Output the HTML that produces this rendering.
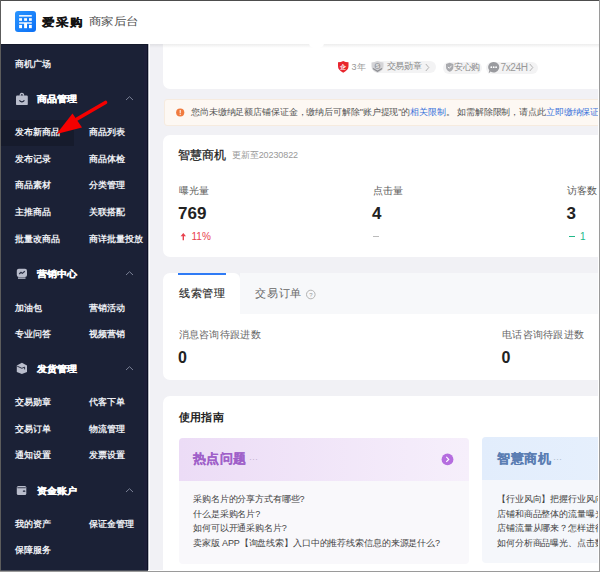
<!DOCTYPE html>
<html><head><meta charset="utf-8">
<style>
*{margin:0;padding:0;box-sizing:border-box}
html,body{width:600px;height:572px;overflow:hidden;background:#fff}
body{font-family:"Liberation Sans",sans-serif;position:relative}
.a{position:absolute;white-space:nowrap;line-height:1}
.si{font-size:9px;color:#eceef3;font-weight:600}
.sh{font-size:10px;color:#fff;font-weight:700;-webkit-text-stroke:0.3px #fff;transform:scaleY(.9);transform-origin:0 80%}
.card{position:absolute;background:#fff;border-radius:7px}
.g{color:#666}
</style></head><body>
<!-- header -->
<div class="a" style="left:1px;top:1px;width:598px;height:43px;background:#fff"></div>
<div class="a" style="left:15px;top:11px;width:21px;height:21px;border-radius:3px;background:linear-gradient(135deg,#2a95ff,#0b6ff5)"></div>
<svg class="a" style="left:15px;top:11px" width="21" height="21" viewBox="15 11 21 21" fill="#fff">
<rect x="19.1" y="15.1" width="12.7" height="1.5"/>
<rect x="19.1" y="18.2" width="2.9" height="2.6"/><rect x="24.1" y="18.2" width="2.9" height="2.6"/><rect x="29" y="18.2" width="2.8" height="2.6"/>
<rect x="19.1" y="22.3" width="12.7" height="1.4"/>
<rect x="19.1" y="24.9" width="2.9" height="3.3"/><rect x="24.1" y="23" width="2.9" height="5.2"/><rect x="29" y="24.9" width="2.8" height="3.3"/>
</svg>
<div class="a" style="left:42px;top:16px;font-size:13px;font-weight:700;color:#111;letter-spacing:1px;-webkit-text-stroke:.2px #111;transform:scaleY(.88);transform-origin:0 0">爱采购</div>
<div class="a" style="left:89px;top:16px;font-size:12px;letter-spacing:.45px;color:#505050;transform:scaleY(.88);transform-origin:0 0">商家后台</div>
<!-- sidebar -->
<div class="a" style="left:1px;top:44px;width:147px;height:527px;background:#1b2136"></div>
<div class="a" style="left:1px;top:120px;width:73px;height:25.5px;background:#161b2c"></div>
<div class="a si" style="left:15px;top:59.8px">商机广场</div>
<div class="a sh" style="left:37px;top:94.0px">商品管理</div>
<svg class="a" style="left:15px;top:91px" width="14" height="15" viewBox="15 91 14 15"><path d="M20.2 95.8 Q20.2 93.3 21.9 93.3 Q23.6 93.3 23.6 95.8" fill="none" stroke="#b9bdcc" stroke-width="1.3"/><rect x="16" y="95.5" width="11.8" height="9.6" rx="1.2" fill="#b9bdcc"/><path d="M19.4 100.3 Q21.9 103.4 24.4 100.3" fill="none" stroke="#1b2136" stroke-width="1.2"/></svg>
<svg class="a" style="left:125px;top:96.0px" width="9" height="5" viewBox="0 0 9 5"><path d="M1 4 L4.5 0.7 L8 4" fill="none" stroke="#7a8095" stroke-width="1"/></svg>
<div class="a si" style="left:15px;top:128.0px">发布新商品</div>
<div class="a si" style="left:89px;top:128.0px">商品列表</div>
<div class="a si" style="left:15px;top:154.7px">发布记录</div>
<div class="a si" style="left:89px;top:154.7px">商品体检</div>
<div class="a si" style="left:15px;top:181.2px">商品素材</div>
<div class="a si" style="left:89px;top:181.2px">分类管理</div>
<div class="a si" style="left:15px;top:207.6px">主推商品</div>
<div class="a si" style="left:89px;top:207.6px">关联搭配</div>
<div class="a si" style="left:15px;top:235.0px">批量改商品</div>
<div class="a si" style="left:89px;top:235.0px">商详批量投放</div>
<div class="a sh" style="left:37px;top:269.2px">营销中心</div>
<svg class="a" style="left:15px;top:267px" width="14" height="13" viewBox="15 267 14 13"><rect x="16.8" y="268.7" width="10.2" height="8.2" rx="2" fill="#b9bdcc"/><rect x="18" y="277.4" width="7.5" height="1.4" fill="#b9bdcc"/><path d="M19.2 274 L21 272.3 L22.3 273.4 L24.8 271.2" fill="none" stroke="#2a3045" stroke-width="1.2" stroke-linejoin="round"/></svg>
<svg class="a" style="left:125px;top:271.2px" width="9" height="5" viewBox="0 0 9 5"><path d="M1 4 L4.5 0.7 L8 4" fill="none" stroke="#7a8095" stroke-width="1"/></svg>
<div class="a si" style="left:15px;top:303.5px">加油包</div>
<div class="a si" style="left:89px;top:303.5px">营销活动</div>
<div class="a si" style="left:15px;top:330.0px">专业问答</div>
<div class="a si" style="left:89px;top:330.0px">视频营销</div>
<div class="a sh" style="left:37px;top:363.8px">发货管理</div>
<svg class="a" style="left:15px;top:361px" width="14" height="15" viewBox="15 361 14 15"><path d="M21.9 362.8 L27 365.4 L27 372 L21.9 374 L16.8 372 L16.8 365.4 Z" fill="#b9bdcc"/><path d="M17.2 366.2 L21.9 368.3 L24.6 367.1 L24.6 369.4" fill="none" stroke="#1b2136" stroke-width="0.9"/></svg>
<svg class="a" style="left:125px;top:365.7px" width="9" height="5" viewBox="0 0 9 5"><path d="M1 4 L4.5 0.7 L8 4" fill="none" stroke="#7a8095" stroke-width="1"/></svg>
<div class="a si" style="left:15px;top:397.8px">交易勋章</div>
<div class="a si" style="left:89px;top:397.8px">代客下单</div>
<div class="a si" style="left:15px;top:424.5px">交易订单</div>
<div class="a si" style="left:89px;top:424.5px">物流管理</div>
<div class="a si" style="left:15px;top:450.8px">通知设置</div>
<div class="a si" style="left:89px;top:450.8px">发票设置</div>
<div class="a sh" style="left:37px;top:485.6px">资金账户</div>
<svg class="a" style="left:15px;top:485px" width="13" height="12" viewBox="15 485 13 12"><rect x="16.8" y="486" width="9.5" height="9" rx="1.5" fill="#b9bdcc"/><rect x="17.3" y="487.4" width="8.5" height="0.8" fill="#1b2136"/><rect x="22.8" y="490.6" width="2.6" height="1.2" rx=".6" fill="#1b2136"/></svg>
<svg class="a" style="left:125px;top:487.5px" width="9" height="5" viewBox="0 0 9 5"><path d="M1 4 L4.5 0.7 L8 4" fill="none" stroke="#7a8095" stroke-width="1"/></svg>
<div class="a si" style="left:15px;top:519.5px">我的资产</div>
<div class="a si" style="left:89px;top:519.5px">保证金管理</div>
<div class="a si" style="left:15px;top:545.8px">保障服务</div>

<!-- main -->
<div class="a" style="left:150px;top:44px;width:447.5px;height:527px;background:#f1f1f5"></div>

<!-- top card -->
<div class="card" style="left:163px;top:36px;width:450px;height:52.7px"></div>
<svg class="a" style="left:337px;top:60px" width="13" height="14" viewBox="337 60 13 14"><path d="M338 62.3 Q341 62 343.2 60.9 Q345.4 62 348.5 62.3 L348.5 66.3 Q348.5 70.3 343.2 72.7 Q338 70.3 338 66.3 Z" fill="#e8262d"/><text x="343.2" y="69.3" font-size="6" fill="#fff" text-anchor="middle" font-weight="bold">企</text></svg>
<div class="a" style="left:351.5px;top:63px;font-size:9px;letter-spacing:.6px;color:#999">3年</div>
<div class="a" style="left:372px;top:61px;width:64px;height:11.5px;border-radius:6px;background:#f3f3f4"></div>
<svg class="a" style="left:371px;top:60px" width="14" height="14" viewBox="371 60 14 14"><path d="M371.5 62.5 Q374.5 62.2 377.5 61 Q380.5 62.2 383.5 62.5 L383.5 66.5 Q383.5 70.5 377.5 72.8 Q371.5 70.5 371.5 66.5 Z" fill="#d4d4d7"/><path d="M373 68.5 L377.5 71.2 L382 68.5" fill="none" stroke="#8d8e93" stroke-width="1.3"/><circle cx="377.5" cy="66" r="2.9" fill="#a3a4a8"/><text x="377.5" y="67.9" font-size="5" fill="#eee" text-anchor="middle" font-weight="bold">S</text></svg>
<div class="a" style="left:386.5px;top:62px;font-size:9px;letter-spacing:-.1px;color:#888">交易勋章</div>
<svg class="a" style="left:423.5px;top:62.5px" width="7" height="10" viewBox="0 0 7 10"><path d="M1.8 1 L4.8 4.5 L1.8 8" fill="none" stroke="#aaa" stroke-width=".9"/></svg>
<div class="a" style="left:443px;top:62px;width:39px;height:11.5px;border-radius:6px;background:#f3f3f4"></div>
<svg class="a" style="left:445px;top:62px" width="10" height="11" viewBox="445 62 10 11"><path d="M449.7 62.8 L453.4 64 L453.4 67 Q453.4 70.3 449.7 71.8 Q446 70.3 446 67 L446 64 Z" fill="#a9aaae"/><path d="M447.9 66.9 L449.3 68.3 L451.6 65.7" fill="none" stroke="#fff" stroke-width=".9"/></svg>
<div class="a" style="left:454px;top:63px;font-size:9px;letter-spacing:-.4px;color:#888">安心购</div>
<div class="a" style="left:486px;top:62px;width:52px;height:11.5px;border-radius:6px;background:#f3f3f4"></div>
<svg class="a" style="left:487px;top:61px" width="13" height="14" viewBox="487 61 13 14"><path d="M493.7 62 A5.5 5.2 0 1 1 490.5 71.4 L488.7 73.5 L489.3 70.3 A5.5 5.2 0 0 1 493.7 62 Z" fill="#999a9e"/><circle cx="491.3" cy="67.2" r=".9" fill="#fff"/><circle cx="493.7" cy="67.2" r=".9" fill="#fff"/><circle cx="496.1" cy="67.2" r=".9" fill="#fff"/></svg>
<div class="a" style="left:500.5px;top:63px;font-size:10px;letter-spacing:-.35px;color:#999">7x24H</div>
<svg class="a" style="left:528px;top:63px" width="7" height="10" viewBox="0 0 7 10"><path d="M1.8 1 L4.8 4.5 L1.8 8" fill="none" stroke="#aaa" stroke-width=".9"/></svg>

<!-- banner -->
<div class="a" style="left:163.5px;top:98.5px;width:450px;height:27.2px;border-radius:3px;background:#fdf8f3;border:1px solid #f6ebdf"></div>
<svg class="a" style="left:175px;top:107px" width="11" height="11" viewBox="175 107 11 11"><circle cx="180.2" cy="112.5" r="4.1" fill="#f07b3f"/><rect x="179.7" y="110" width="1" height="3.3" fill="#fff"/><rect x="179.7" y="113.9" width="1" height="1" fill="#fff"/></svg>
<div class="a" style="left:191px;top:107.5px;font-size:9px;letter-spacing:-.12px;color:#555">您尚未缴纳足额店铺保证金，缴纳后可解除"账户提现"的<span style="color:#3b73db">相关限制</span>。 如需解除限制，请点此<span style="color:#3b73db">立即缴纳保证金</span></div>

<!-- smart card -->
<div class="card" style="left:163px;top:135px;width:450px;height:121.7px"></div>
<div class="a" style="left:177.5px;top:149px;font-size:12px;font-weight:500;color:#222;-webkit-text-stroke:.25px #222">智慧商机</div>
<div class="a" style="left:232px;top:151px;font-size:9px;letter-spacing:-.1px;color:#999">更新至20230822</div>
<div class="a" style="left:178.5px;top:185.5px;font-size:10px;letter-spacing:.2px;color:#5a5a5a">曝光量</div>
<div class="a" style="left:178px;top:205px;font-size:17px;font-weight:bold;color:#222">769</div>
<svg class="a" style="left:180px;top:232px" width="7" height="9" viewBox="180 232 7 9"><path d="M183.3 233 L186 236.3 L184 236.3 L184 240.3 L182.6 240.3 L182.6 236.3 L180.6 236.3 Z" fill="#e8414d"/></svg>
<div class="a" style="left:191.5px;top:232px;font-size:10px;color:#e8414d">11%</div>
<div class="a" style="left:372.5px;top:185.5px;font-size:10px;letter-spacing:.2px;color:#5a5a5a">点击量</div>
<div class="a" style="left:372px;top:205px;font-size:17px;font-weight:bold;color:#222">4</div>
<div class="a" style="left:373px;top:236px;width:6px;height:1px;background:#bbb"></div>
<div class="a" style="left:566.5px;top:185.5px;font-size:10px;letter-spacing:.2px;color:#5a5a5a">访客数</div>
<div class="a" style="left:566.5px;top:205px;font-size:17px;font-weight:bold;color:#222">3</div>
<div class="a" style="left:568.5px;top:236px;width:6px;height:1.2px;background:#22b88a"></div>
<div class="a" style="left:580px;top:232px;font-size:10px;color:#22b88a">1</div>

<!-- tabs card -->
<div class="card" style="left:163px;top:272.8px;width:450px;height:107.2px"></div>
<div class="a" style="left:240px;top:272.8px;width:360px;height:41.2px;background:#f7f8fa;border-radius:0 0 0 0"></div>
<div class="a" style="left:234px;top:272.8px;width:6px;height:6px;background:#f0f1f5"></div>
<div class="a" style="left:228px;top:272.8px;width:12px;height:12px;background:#fff;border-radius:0 6px 0 0"></div>
<div class="a" style="left:178px;top:272.8px;width:48px;height:2px;background:#2f7bf5"></div>
<div class="a" style="left:179px;top:288px;font-size:11px;letter-spacing:.6px;font-weight:500;color:#2a2a2a;-webkit-text-stroke:.15px #2a2a2a">线索管理</div>
<div class="a" style="left:255px;top:288px;font-size:11px;letter-spacing:.8px;color:#666">交易订单</div>
<svg class="a" style="left:305px;top:289px" width="12" height="12" viewBox="305 289 12 12"><circle cx="310.8" cy="294.5" r="4.3" fill="none" stroke="#aaa" stroke-width=".9"/><text x="310.8" y="296.8" font-size="6" fill="#999" text-anchor="middle">?</text></svg>
<div class="a" style="left:178.5px;top:329.5px;font-size:10px;letter-spacing:.3px;color:#666">消息咨询待跟进数</div>
<div class="a" style="left:178px;top:350px;font-size:16px;font-weight:bold;color:#222">0</div>
<div class="a" style="left:502px;top:329.5px;font-size:10px;letter-spacing:.3px;color:#666">电话咨询待跟进数</div>
<div class="a" style="left:501.5px;top:350px;font-size:16px;font-weight:bold;color:#222">0</div>

<!-- guide card -->
<div class="card" style="left:163px;top:395.9px;width:450px;height:200px"></div>
<div class="a" style="left:178.5px;top:412px;font-size:11px;letter-spacing:.4px;font-weight:700;color:#222">使用指南</div>
<div class="a" style="left:178.5px;top:437.5px;width:290px;height:126px;border-radius:4px;background:#f9f8fb;overflow:hidden"><div style="height:43.2px;background:linear-gradient(90deg,#ecdcf6,#f6effb)"></div></div>
<div class="a" style="left:192.5px;top:452px;font-size:13px;letter-spacing:.5px;font-weight:bold;color:#9f5fc9;-webkit-text-stroke:.12px #9f5fc9">热点问题</div>
<div class="a" style="left:249px;top:455px;font-size:9px;color:#c4b2d0">···</div>
<svg class="a" style="left:441px;top:453px" width="13" height="13" viewBox="441 453 13 13"><circle cx="447.5" cy="459.4" r="5.9" fill="#b56ddf"/><path d="M446.3 456.9 L448.7 459.4 L446.3 461.9" fill="none" stroke="#fff" stroke-width="1.2"/></svg>
<div class="a" style="left:193px;top:494.5px;font-size:9px;letter-spacing:-.12px;color:#444">采购名片的分享方式有哪些?</div>
<div class="a" style="left:193px;top:509.5px;font-size:9px;letter-spacing:-.12px;color:#444">什么是采购名片?</div>
<div class="a" style="left:193px;top:524px;font-size:9px;letter-spacing:-.12px;color:#444">如何可以开通采购名片?</div>
<div class="a" style="left:193px;top:539px;font-size:9px;letter-spacing:-.12px;color:#444">卖家版 APP【询盘线索】入口中的推荐线索信息的来源是什么?</div>
<div class="a" style="left:481.8px;top:437.3px;width:200px;height:126px;border-radius:4px;background:#f5f7fb;overflow:hidden"><div style="height:43px;background:linear-gradient(90deg,#e2edfc,#e8f1fd)"></div></div>
<div class="a" style="left:497px;top:452px;font-size:13px;letter-spacing:.5px;font-weight:bold;color:#5a7db3;-webkit-text-stroke:.12px #5a7db3">智慧商机</div>
<div class="a" style="left:553px;top:455px;font-size:9px;color:#b0bccc">···</div>
<div class="a" style="left:497px;top:494.5px;font-size:9px;letter-spacing:-.12px;color:#444">【行业风向】把握行业风向，了解</div>
<div class="a" style="left:497px;top:509.5px;font-size:9px;letter-spacing:-.12px;color:#444">店铺和商品整体的流量曝光情况</div>
<div class="a" style="left:497px;top:524px;font-size:9px;letter-spacing:-.12px;color:#444">店铺流量从哪来？怎样进行优化</div>
<div class="a" style="left:497px;top:539px;font-size:9px;letter-spacing:-.12px;color:#444">如何分析商品曝光、点击数据</div>
<div class="a" style="left:597.5px;top:44px;width:1.5px;height:527px;background:#fff"></div>
<div class="a" style="left:144px;top:44px;width:3px;height:527px;background:#1e2039"></div><div class="a" style="left:147px;top:44px;width:1px;height:527px;background:#0c1124"></div><div class="a" style="left:148px;top:44px;width:1px;height:527px;background:#b8bac2"></div><div class="a" style="left:149px;top:44px;width:1.2px;height:527px;background:#fff"></div>
<div class="a" style="left:150px;top:36px;width:449px;height:8px;background:#fff"></div><div class="a" style="left:150px;top:44px;width:449px;height:4px;background:linear-gradient(rgba(0,0,0,.07),rgba(0,0,0,0))"></div><div class="a" style="left:309px;top:43px;width:15px;height:5px;border-radius:0 0 7.5px 7.5px;background:#fff"></div><div class="a" style="left:1px;top:44px;width:147px;height:1px;background:#151a2b"></div>
<!-- red arrow -->
<svg class="a" style="left:0;top:0" width="600" height="572" viewBox="0 0 600 572">
<path d="M105.5 102.5 L77 119" stroke="#f50000" stroke-width="3.6" stroke-linecap="round"/>
<path d="M56.5 134 L72.5 113.5 L82 127.5 Z" fill="#f50000"/>
</svg>
<!-- frame -->
<div class="a" style="left:0;top:0;width:600px;height:1px;background:#4d4d4d"></div>
<div class="a" style="left:0;top:0;width:1px;height:572px;background:#5c5c5c"></div>
<div class="a" style="left:599px;top:0;width:1px;height:572px;background:#9a9a9a"></div>
<div class="a" style="left:148px;top:570px;width:451px;height:1px;background:#fff"></div><div class="a" style="left:1px;top:570px;width:147px;height:1px;background:#4a4e5a"></div><div class="a" style="left:0;top:571px;width:600px;height:1px;background:#9a9a9a"></div>
</body></html>
